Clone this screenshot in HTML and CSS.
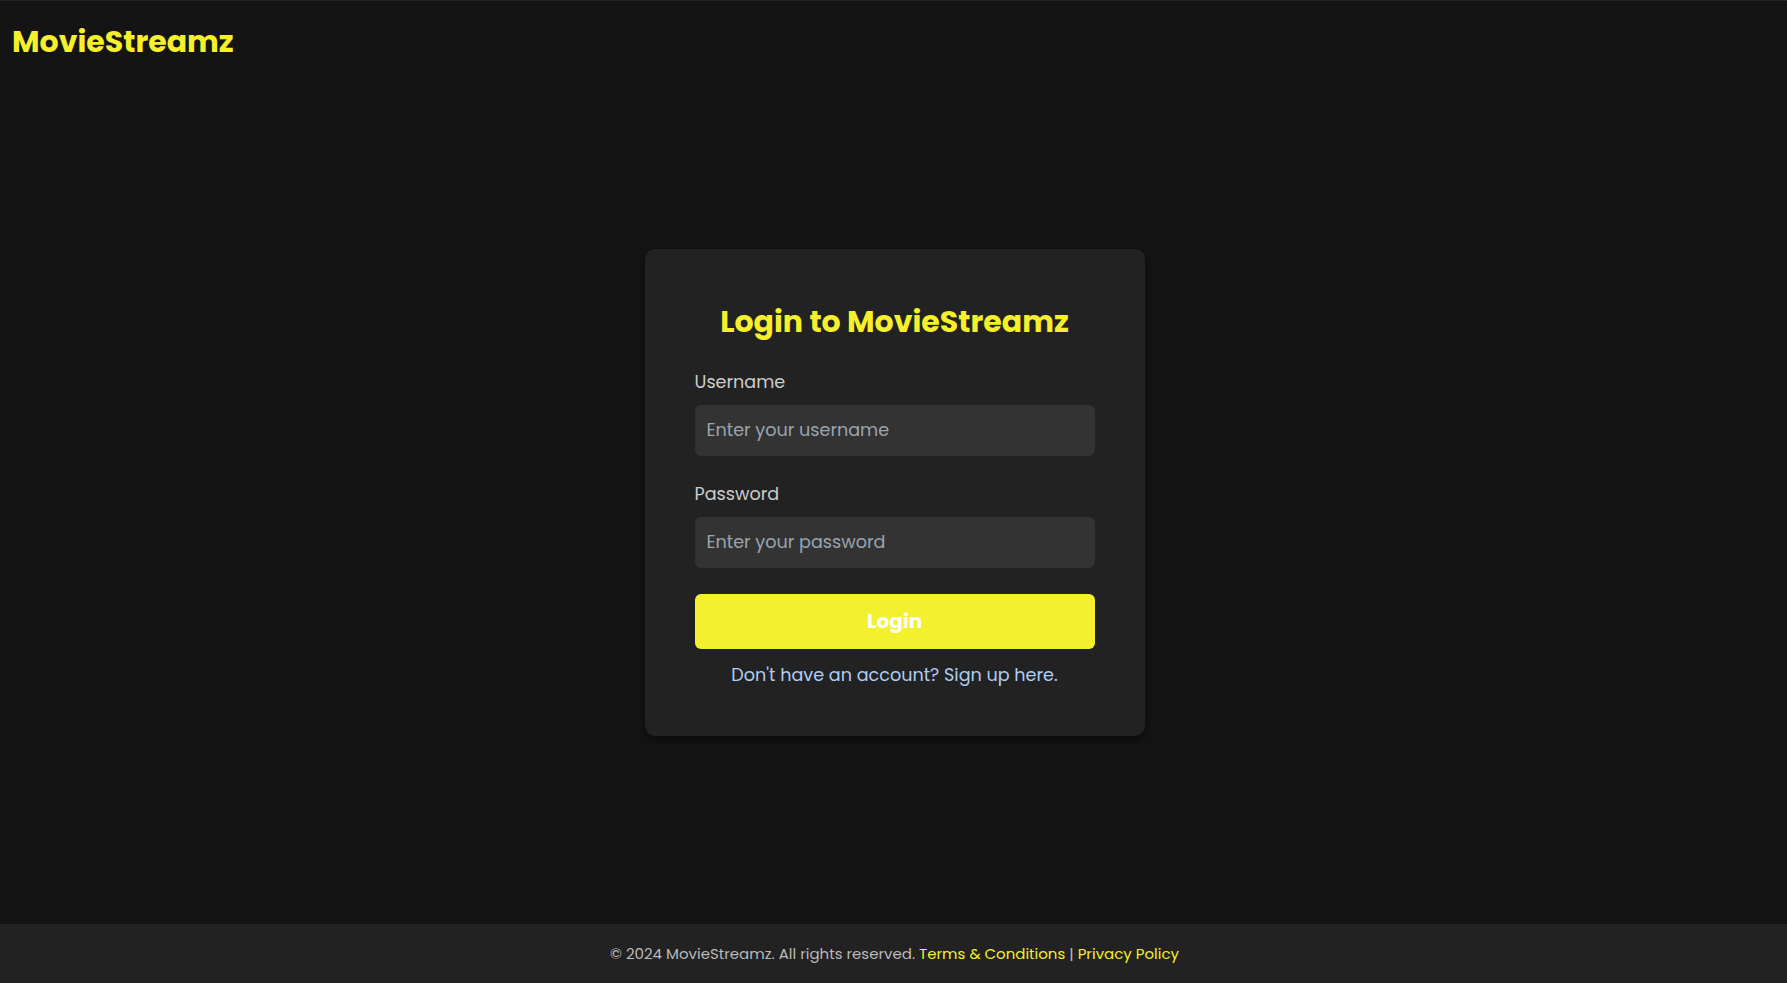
FILE: index.html
```html
<!DOCTYPE html>
<html lang="en">
<head>
<meta charset="utf-8">
<title>Login - MovieStreamz</title>
<link rel="stylesheet" href="styles.css">
</head>
<body>
<div class="page">
  <header class="site-header">
    <div class="logo">MovieStreamz</div>
  </header>
  <main class="main">
    <form class="login-card">
      <h2 class="login-title">Login to MovieStreamz</h2>
      <label class="field-label" for="username">Username</label>
      <input class="field-input" id="username" type="text" placeholder="Enter your username">
      <label class="field-label" for="password">Password</label>
      <input class="field-input" id="password" type="password" placeholder="Enter your password">
      <button class="login-btn" type="button">Login</button>
      <p class="signup"><a href="#">Don't have an account? Sign up here.</a></p>
    </form>
  </main>
  <footer class="site-footer">
    <p>&copy; 2024 MovieStreamz. All rights reserved. <a href="#">Terms &amp; Conditions</a> | <a href="#">Privacy Policy</a></p>
  </footer>
</div>
</body>
</html>
```
FILE: styles.css
```css
* { box-sizing: border-box; }
html, body { margin: 0; padding: 0; }
body {
  background: #141414;
  color: #e0e0e0;
  font-family: "Poppins", "Inter", "Noto Sans", sans-serif;
}
.page {
  min-height: 100vh;
  display: flex;
  flex-direction: column;
  border-top: 1px solid #232323;
}
.site-header {
  height: 59px;
  padding: 0 12px;
  display: flex;
  align-items: flex-end;
}
.logo {
  color: #f5ef2c;
  font-weight: 700;
  font-size: 30px;
  line-height: 40px;
  margin-bottom: -2px;
}
.main {
  flex: 1;
  display: flex;
  align-items: center;
  justify-content: center;
  padding-left: 2px;
}
.login-card {
  width: 500px;
  background: #222222;
  border-radius: 10px;
  padding: 50px 50px 48px;
  display: flex;
  flex-direction: column;
  box-shadow: 0 4px 10px rgba(0,0,0,0.5);
}
.login-title {
  margin: 0 0 25px;
  text-align: center;
  color: #f5ef2c;
  font-size: 30px;
  font-weight: 700;
  line-height: 45px;
}
.field-label {
  color: #cccccc;
  font-size: 17.6px;
  line-height: 26px;
  margin-bottom: 10px;
}
.field-input {
  height: 51px;
  border: none;
  border-radius: 6px;
  background: #333333;
  color: #e0e0e0;
  padding: 0 12px;
  font-family: inherit;
  font-size: 17.6px;
  margin-bottom: 25px;
  outline: none;
}
.field-input::placeholder { color: #9aa4ae; }
.login-btn {
  margin-top: 1px;
  height: 55px;
  border: none;
  border-radius: 6px;
  background: #f3f02e;
  color: #ffffff;
  font-family: inherit;
  font-weight: 700;
  font-size: 20px;
  cursor: pointer;
}
.signup {
  margin: 13px 0 0;
  text-align: center;
  font-size: 17.6px;
  line-height: 26px;
}
.signup a { color: #afcdf3; text-decoration: none; }
.site-footer {
  height: 59px;
  background: #222222;
  display: flex;
  align-items: center;
  justify-content: center;
  padding-left: 2px;
}
.site-footer p {
  margin: 0;
  color: #bbbbbb;
  font-size: 15px;
}
.site-footer a { color: #f5ef2c; text-decoration: none; }
```
